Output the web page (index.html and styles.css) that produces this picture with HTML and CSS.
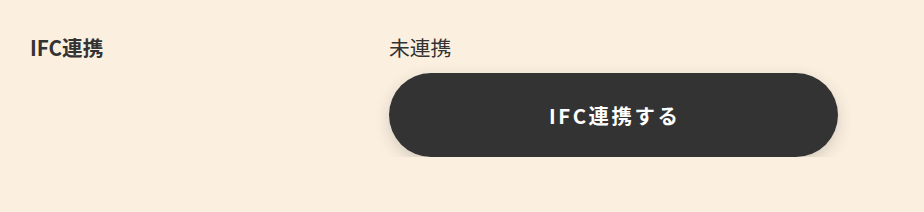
FILE: index.html
```html
<!DOCTYPE html>
<html lang="ja">
<head>
<meta charset="utf-8">
<link rel="stylesheet" href="styles.css">
</head>
<body>
<div class="row">
  <div class="label">IFC連携</div>
  <div class="value">
    <div class="status">未連携</div>
    <button class="btn">IFC連携する</button>
  </div>
</div>
</body>
</html>
```
FILE: styles.css
```css
html, body {
  margin: 0;
  padding: 0;
  background: #fbf0e0;
}
body {
  font-family: "Noto Sans CJK JP", "Noto Sans", sans-serif;
  color: #333;
}
.row {
  display: flex;
  padding: 33px 30px 0 30px;
}
.label {
  width: 359px;
  font-size: 20.6px;
  font-weight: 700;
  line-height: 28px;
}
.value {
  display: flex;
  flex-direction: column;
  gap: 12px;
}
.status {
  font-size: 20.8px;
  line-height: 28px;
}
.btn {
  width: 449px;
  height: 84px;
  border: none;
  border-radius: 42px;
  background: #333;
  color: #fff;
  font-family: inherit;
  font-size: 20.4px;
  font-weight: 700;
  letter-spacing: 2.6px;
  text-indent: 2.6px;
  box-shadow: 0 5px 16px rgba(0,0,0,0.16);
  cursor: pointer;
}
```
